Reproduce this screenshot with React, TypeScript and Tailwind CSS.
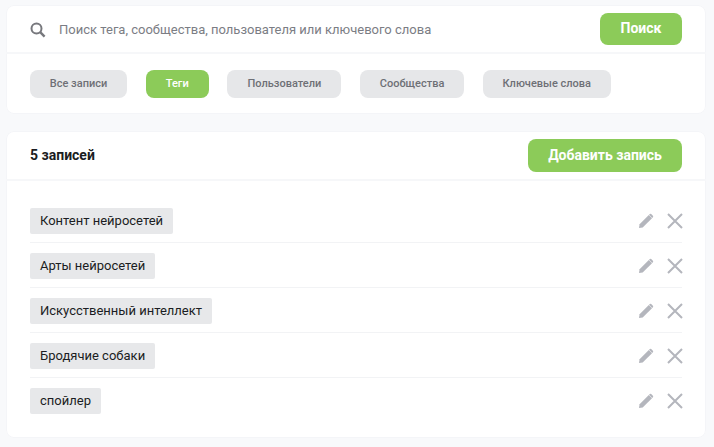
import React from "react";

const filters = [
  { label: "Все записи", w: "w-[97px]" },
  { label: "Теги", w: "w-[63px]", active: true },
  { label: "Пользователи", w: "w-[114px]" },
  { label: "Сообщества", w: "w-[104px]" },
  { label: "Ключевые слова", w: "w-[128px]" },
];

const rows = ["Контент нейросетей", "Арты нейросетей", "Искусственный интеллект", "Бродячие собаки", "спойлер"];

function Pencil() {
  return (
    <svg width="16" height="16" viewBox="0 0 16 16" className="block">
      <path d="M1 15l.6-3.7L10.8 2l3.2 3.2-9.3 9.2L1 15z" fill="#b4b6bd" />
      <path d="M11.8 1.1a1 1 0 0 1 1.4 0l1.7 1.7a1 1 0 0 1 0 1.4l-.7.7-3.1-3.1.7-.7z" fill="#b4b6bd" />
    </svg>
  );
}

function Cross() {
  return (
    <svg width="16" height="16" viewBox="0 0 16 16" className="block">
      <path d="M1 1l14 14M15 1L1 15" stroke="#b4b6bd" strokeWidth="2" fill="none" />
    </svg>
  );
}

export default function App() {
  return (
    <div className="w-[714px] h-[447px] overflow-hidden bg-[#f8f9fb] pt-[5px] pl-[6px] font-['Roboto',sans-serif]">
      <div className="w-[700px] h-[109px] bg-white rounded-[8px] shadow-[inset_0_0_0_1px_#f4f5f8]">
        <div className="h-[49px] flex items-center pl-[24px] pr-[24px] border-b-2 border-[#f6f7f9]">
          <svg width="16" height="16" viewBox="0 0 16 16" className="shrink-0 mt-[2px]" fill="none">
            <circle cx="6.5" cy="6.5" r="5" stroke="#77787d" strokeWidth="2" />
            <path d="M10.2 10.2L14.6 14.6" stroke="#77787d" strokeWidth="2.4" />
          </svg>
          <span className="ml-[13px] mt-[2px] text-[13px] text-[#7b7d84] leading-none">Поиск тега, сообщества, пользователя или ключевого слова</span>
          <button className="ml-auto w-[82px] h-[32px] rounded-[8px] bg-[#8ccb59] text-white text-[14px] font-bold">Поиск</button>
        </div>
        <div className="flex items-center pl-[24px] pt-[16px] gap-[18.7px]">
          {filters.map((f) => (
            <div
              key={f.label}
              className={`${f.w} h-[28px] rounded-[8px] flex items-center justify-center text-[11px] font-medium ${f.active ? "bg-[#8ccb59] text-white font-bold" : "bg-[#e6e7e9] text-[#6e7076]"}`}
            >
              {f.label}
            </div>
          ))}
        </div>
      </div>
      <div className="mt-[17px] w-[700px] h-[307px] bg-white rounded-[8px] shadow-[inset_0_0_0_1px_#f4f5f8]">
        <div className="h-[50px] flex items-center pl-[24px] pr-[24px] border-b-2 border-[#f6f7f9]">
          <span className="text-[14px] font-bold text-[#1b1d22]">5 записей</span>
          <button className="ml-auto w-[154px] h-[33px] rounded-[8px] bg-[#8ccb59] text-white text-[14px] font-bold">Добавить запись</button>
        </div>
        <div className="px-[24px] pt-[17px]">
          {rows.map((r, i) => (
            <div key={r} className={`h-[45px] flex items-start pt-[10px] ${i < rows.length - 1 ? "border-b border-[#f2f3f5]" : ""}`}>
              <span className="h-[26px] px-[10px] flex items-center rounded-[2px] bg-[#e7e8ea] text-[13px] text-[#1b1d22]">{r}</span>
              <div className="ml-auto mr-[-1px] flex items-center gap-[13px] pt-[5px]">
                <Pencil />
                <Cross />
              </div>
            </div>
          ))}
        </div>
      </div>
    </div>
  );
}
